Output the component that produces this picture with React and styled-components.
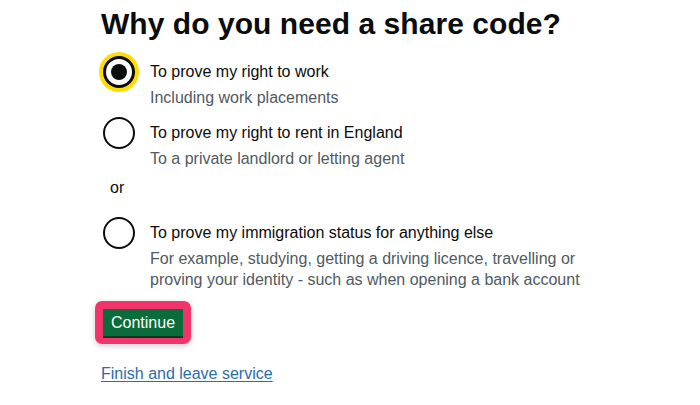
import styled, { createGlobalStyle } from "styled-components";

const GlobalStyle = createGlobalStyle`
  body {
    margin: 0;
    background: #ffffff;
    font-family: "Liberation Sans", Arial, sans-serif;
    color: #0b0c0c;
  }
`;

const Page = styled.main`
  padding: 5px 0 0 101px;
`;

const Heading = styled.h1`
  margin: 0 0 13px;
  font-size: 30px;
  line-height: 38px;
  font-weight: 700;
  letter-spacing: 0.05px;
`;

const Item = styled.label`
  display: flex;
  align-items: flex-start;
  gap: 15px;
  margin-top: ${(p) => p.$gap || 0}px;
  cursor: pointer;
`;

const Radio = styled.span`
  position: relative;
  flex: none;
  box-sizing: border-box;
  width: 32px;
  height: 32px;
  margin-left: 2px;
  border: ${(p) => (p.$checked ? 3 : 2)}px solid #0b0c0c;
  border-radius: 50%;
  background: #fff;
  box-shadow: ${(p) => (p.$focused ? "0 0 0 4px #ffdd00" : "none")};

  &::after {
    content: "";
    display: ${(p) => (p.$checked ? "block" : "none")};
    position: absolute;
    left: 5px;
    top: 5px;
    width: 16px;
    height: 16px;
    border-radius: 50%;
    background: #0b0c0c;
  }
`;

const Text = styled.span`
  display: flex;
  flex-direction: column;
  padding-top: 4px;
`;

const Label = styled.span`
  font-size: 16px;
  line-height: 24px;
`;

const Hint = styled.span`
  margin-top: 3px;
  font-size: 16px;
  line-height: 21px;
  color: #505a5f;
  max-width: 440px;
`;

const Divider = styled.div`
  margin: 8px 0 0 9px;
  font-size: 16px;
  line-height: 21px;
`;

const FocusRing = styled.span`
  display: inline-block;
  margin: 11px 0 0 -6px;
  padding: 8px;
  border-radius: 7px;
  background: #f3336c;
  box-shadow: 0 2px 6px rgba(0, 0, 0, 0.2);
`;

const Button = styled.button`
  display: block;
  margin: 0;
  padding: 4px 8px;
  border: 0;
  border-radius: 0;
  background: #0a6b3b;
  box-shadow: 0 2px 0 #003b1f;
  color: #ffffff;
  font-family: "Liberation Sans", Arial, sans-serif;
  font-size: 16px;
  line-height: 19px;
  cursor: pointer;
`;

const Link = styled.a`
  display: inline-block;
  margin-top: 19px;
  font-size: 16px;
  line-height: 21px;
  color: #2b6ea6;
  text-decoration: underline;
  text-underline-offset: 2px;
`;

const options = [
  {
    label: "To prove my right to work",
    hint: "Including work placements",
    checked: true,
  },
  {
    label: "To prove my right to rent in England",
    hint: "To a private landlord or letting agent",
    gap: 9,
  },
];

export default function App() {
  return (
    <>
      <GlobalStyle />
      <Page>
        <Heading>Why do you need a share code?</Heading>
        {options.map((o) => (
          <Item key={o.label} $gap={o.gap}>
            <Radio $checked={o.checked} $focused={o.checked} />
            <Text>
              <Label>{o.label}</Label>
              <Hint>{o.hint}</Hint>
            </Text>
          </Item>
        ))}
        <Divider>or</Divider>
        <Item $gap={19}>
          <Radio />
          <Text>
            <Label>To prove my immigration status for anything else</Label>
            <Hint>
              For example, studying, getting a driving licence, travelling or
              proving your identity - such as when opening a bank account
            </Hint>
          </Text>
        </Item>
        <div>
          <FocusRing>
            <Button>Continue</Button>
          </FocusRing>
        </div>
        <Link href="#">Finish and leave service</Link>
      </Page>
    </>
  );
}
